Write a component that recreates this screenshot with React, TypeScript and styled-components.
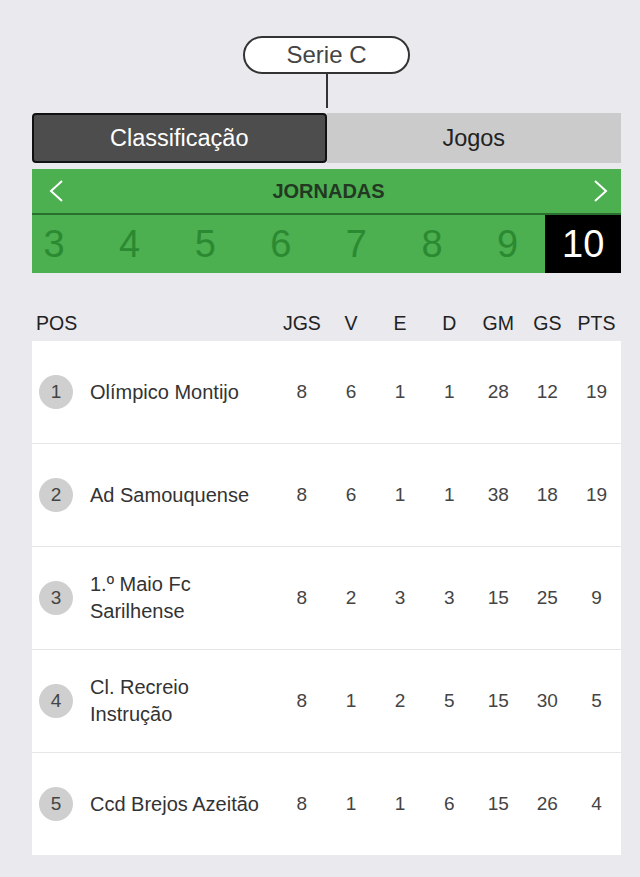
import React from "react";
import styled, { createGlobalStyle } from "styled-components";

const Global = createGlobalStyle`
  html, body { margin: 0; padding: 0; background: #e9e9ee; }
  body { font-family: "Liberation Sans", Arial, sans-serif; }
`;

const Page = styled.div`
  padding: 36px 19px 22px 32px;
  display: flex;
  flex-direction: column;
`;

const SerieWrap = styled.div`
  display: flex;
  flex-direction: column;
  align-items: center;
`;

const Pill = styled.div`
  width: 163px;
  height: 34px;
  border: 2px solid #333;
  border-radius: 20px;
  background: #fff;
  display: flex;
  align-items: center;
  justify-content: center;
  font-size: 24px;
  color: #444;
`;

const Stem = styled.div`
  width: 2px;
  height: 34px;
  background: #333;
`;

const Tabs = styled.div`
  margin-top: 5px;
  display: grid;
  grid-template-columns: 1fr 1fr;
  height: 50px;
`;

const Tab = styled.div<{ $active?: boolean }>`
  display: flex;
  align-items: center;
  justify-content: center;
  font-size: 23.5px;
  box-sizing: border-box;
  ${(p) =>
    p.$active
      ? `background:#4d4d4d;color:#fff;border:2px solid #111;border-radius:4px;`
      : `background:#cbcbcb;color:#222;`}
`;

const Jornadas = styled.div`
  margin-top: 6px;
  background: #4caf50;
  display: flex;
  flex-direction: column;
`;

const JHead = styled.div`
  height: 44px;
  display: flex;
  align-items: center;
  justify-content: space-between;
  padding: 0 12px 0 16px;
  border-bottom: 2px solid #2a6f2d;
`;

const JTitle = styled.div`
  font-weight: bold;
  font-size: 20px;
  color: #233823;
`;

const Arrow = styled.svg`
  width: 16px;
  height: 24px;
  display: block;
`;

const Numbers = styled.div`
  height: 58px;
  display: flex;
  justify-content: flex-end;
  overflow: hidden;
`;

const Num = styled.div<{ $active?: boolean }>`
  flex: 0 0 75.6px;
  display: flex;
  align-items: center;
  justify-content: center;
  font-size: 38px;
  color: ${(p) => (p.$active ? "#fff" : "#2b8a31")};
  background: ${(p) => (p.$active ? "#000" : "transparent")};
`;

const cols = "58px 1fr repeat(7, 49.1px)";

const HeaderRow = styled.div`
  margin-top: 32px;
  height: 36px;
  display: grid;
  grid-template-columns: ${cols};
  align-items: center;
  font-size: 19.5px;
  color: #222;
`;

const HCell = styled.div<{ $left?: boolean }>`
  text-align: ${(p) => (p.$left ? "left" : "center")};
  padding-left: ${(p) => (p.$left ? "4px" : "0")};
`;

const Table = styled.div`
  background: #fff;
  display: flex;
  flex-direction: column;
`;

const Row = styled.div`
  height: 102px;
  display: grid;
  grid-template-columns: ${cols};
  align-items: center;
  border-top: 1px solid #e6e6e6;
  &:first-child { border-top: none; }
  font-size: 19px;
  color: #444;
`;

const PosCell = styled.div`
  padding-left: 7px;
`;

const Badge = styled.div`
  width: 34px;
  height: 34px;
  border-radius: 50%;
  background: #cfcfcf;
  color: #444;
  display: flex;
  align-items: center;
  justify-content: center;
  font-size: 19px;
`;

const Name = styled.div`
  color: #333;
  font-size: 20px;
  line-height: 27px;
  padding-right: 8px;
`;

const Val = styled.div`
  text-align: center;
`;

const data = [
  { pos: 1, name: "Olímpico Montijo", v: [8, 6, 1, 1, 28, 12, 19] },
  { pos: 2, name: "Ad Samouquense", v: [8, 6, 1, 1, 38, 18, 19] },
  { pos: 3, name: "1.º Maio Fc Sarilhense", v: [8, 2, 3, 3, 15, 25, 9] },
  { pos: 4, name: "Cl. Recreio Instrução", v: [8, 1, 2, 5, 15, 30, 5] },
  { pos: 5, name: "Ccd Brejos Azeitão", v: [8, 1, 1, 6, 15, 26, 4] },
];

export default function App() {
  return (
    <>
      <Global />
      <Page>
        <SerieWrap>
          <Pill>Serie C</Pill>
          <Stem />
        </SerieWrap>
        <Tabs>
          <Tab $active>Classificação</Tab>
          <Tab>Jogos</Tab>
        </Tabs>
        <Jornadas>
          <JHead>
            <Arrow viewBox="0 0 16 24">
              <polyline points="14,2 3,12 14,22" fill="none" stroke="#fff" strokeWidth="2" />
            </Arrow>
            <JTitle>JORNADAS</JTitle>
            <Arrow viewBox="0 0 16 24">
              <polyline points="2,2 13,12 2,22" fill="none" stroke="#fff" strokeWidth="2" />
            </Arrow>
          </JHead>
          <Numbers>
            {[3, 4, 5, 6, 7, 8, 9, 10].map((n) => (
              <Num key={n} $active={n === 10}>
                {n}
              </Num>
            ))}
          </Numbers>
        </Jornadas>
        <HeaderRow>
          <HCell $left>POS</HCell>
          <div />
          {["JGS", "V", "E", "D", "GM", "GS", "PTS"].map((h) => (
            <HCell key={h}>{h}</HCell>
          ))}
        </HeaderRow>
        <Table>
          {data.map((r) => (
            <Row key={r.pos}>
              <PosCell>
                <Badge>{r.pos}</Badge>
              </PosCell>
              <Name>{r.name}</Name>
              {r.v.map((x, i) => (
                <Val key={i}>{x}</Val>
              ))}
            </Row>
          ))}
        </Table>
      </Page>
    </>
  );
}
